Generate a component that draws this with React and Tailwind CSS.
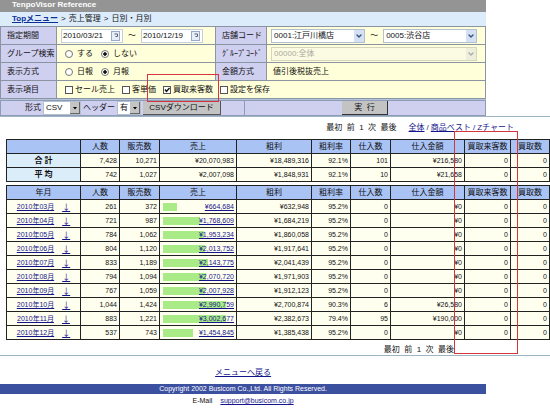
import { ChevronDown } from 'lucide-react'

const MONTHS = [
  ['2010年03月', '261', '372', '¥664,684', '¥632,948', '95.2%', '0', '¥0', 14],
  ['2010年04月', '721', '987', '¥1,768,609', '¥1,684,219', '95.2%', '0', '¥0', 37],
  ['2010年05月', '784', '1,062', '¥1,953,234', '¥1,860,058', '95.2%', '0', '¥0', 41],
  ['2010年06月', '804', '1,120', '¥2,013,752', '¥1,917,641', '95.2%', '0', '¥0', 42],
  ['2010年07月', '833', '1,189', '¥2,143,775', '¥2,041,439', '95.2%', '0', '¥0', 45],
  ['2010年08月', '794', '1,094', '¥2,070,720', '¥1,971,903', '95.2%', '0', '¥0', 43],
  ['2010年09月', '767', '1,059', '¥2,007,928', '¥1,912,123', '95.2%', '0', '¥0', 42],
  ['2010年10月', '1,044', '1,424', '¥2,990,759', '¥2,700,874', '90.3%', '6', '¥26,580', 63],
  ['2010年11月', '883', '1,221', '¥3,002,677', '¥2,382,673', '79.4%', '95', '¥190,000', 63],
  ['2010年12月', '537', '743', '¥1,454,845', '¥1,385,438', '95.2%', '0', '¥0', 30]
]

const TOTALS = [
  ['合 計', '7,428', '10,271', '¥20,070,983', '¥18,489,316', '92.1%', '101', '¥216,580', '0', '0'],
  ['平 均', '742', '1,027', '¥2,007,098', '¥1,848,931', '92.1%', '10', '¥21,658', '0', '0']
]

const HEADINGS = ['人数', '販売数', '売上', '粗利', '粗利率', '仕入数', '仕入金額', '買取来客数', '買取数']

const Columns = () => (
  <colgroup>
    <col className="w-[74px]" />
    <col className="w-[39px]" />
    <col className="w-[40px]" />
    <col className="w-[77px]" />
    <col className="w-[75px]" />
    <col className="w-[39px]" />
    <col className="w-[40px]" />
    <col className="w-[74px]" />
    <col className="w-[46px]" />
    <col className="w-[39px]" />
  </colgroup>
)

const HeadRow = ({ first }) => (
  <thead>
    <tr className="h-3.5 bg-[#a9c3f5]">
      {[first, ...HEADINGS].map((text, i) => (
        <th key={i} scope="col" className="border border-[#222] p-0 font-normal whitespace-nowrap">
          {text}
        </th>
      ))}
    </tr>
  </thead>
)

const Cell = ({ children }) => (
  <td className="border border-[#222] bg-[#fffff0] p-0 pr-0.5 text-right text-[7px]">{children}</td>
)

const Label = ({ htmlFor, children }) => (
  <div className="flex items-center bg-[#cfcff0] pl-1.5 whitespace-nowrap">
    {htmlFor ? <label htmlFor={htmlFor}>{children}</label> : <span>{children}</span>}
  </div>
)

const Field = ({ children, className = '' }) => (
  <div className={`flex items-center bg-[#ffffd9] ${className}`}>{children}</div>
)

const DateField = ({ id, label, value }) => (
  <span className="flex h-3.5 w-[62px] items-center border border-[#c5d0dc] bg-white">
    <input id={id} aria-label={label} defaultValue={value} className="w-[49px] pl-px" />
    <button type="button" aria-label={`${label} カレンダー`}>
      <svg viewBox="0 0 10 10" className="size-2.5">
        <rect x="0.5" y="0.5" width="8" height="9" fill="#e8eef8" stroke="#9aaac4" />
        <path d="M3.5 3h3v2.5h-2" fill="none" stroke="#55617c" />
      </svg>
    </button>
  </span>
)

const Select = ({ id, label, value, className = '', classic, disabled }) => (
  <span className={`relative flex h-3.5 ${className}`}>
    <select
      id={id}
      aria-label={label}
      disabled={disabled}
      className={`h-full w-full appearance-none border pl-0.5 ${
        disabled ? 'border-[#d5d5bd] bg-[#fbfbe4] text-[#aaaa9c]' : 'border-[#b3c1cf] bg-white'
      }`}
    >
      <option>{value}</option>
    </select>
    {classic ? (
      <span className="pointer-events-none absolute inset-y-px right-px flex w-2.5 items-end justify-center border-r border-b border-[#666] bg-[#c4c4c4] pb-0.5">
        <svg viewBox="0 0 6 4" className="h-1 w-1.5">
          <path d="M1 0h4L3 2.5z" />
        </svg>
      </span>
    ) : (
      <span
        className={`pointer-events-none absolute inset-y-px right-px flex w-2.5 items-center justify-center ${
          disabled ? 'bg-[#eeeedd] text-[#aaa]' : 'bg-[#d5e0f5] text-[#35507c]'
        }`}
      >
        <ChevronDown className="size-2" strokeWidth={4} />
      </span>
    )}
  </span>
)

const Radio = ({ name, label, checked }) => (
  <label className="flex items-center gap-1">
    <input
      type="radio"
      name={name}
      defaultChecked={checked}
      className="size-2 appearance-none rounded-full border border-[#777] bg-white checked:bg-[radial-gradient(circle,#111_35%,#fff_45%)]"
    />
    {label}
  </label>
)

const Check = ({ label, checked }) => (
  <label className="flex items-center gap-0.5 whitespace-nowrap">
    <span className="relative flex size-2">
      <input
        type="checkbox"
        defaultChecked={checked}
        className="peer size-2 appearance-none border border-[#555] bg-white"
      />
      <svg viewBox="0 0 8 8" className="pointer-events-none absolute inset-0 hidden peer-checked:block">
        <path d="M2 3.5L3.5 5.5L6.5 2" fill="none" stroke="#111" strokeWidth="1.4" />
      </svg>
    </span>
    {label}
  </label>
)

const Pager = () => <span className="whitespace-pre">最初  前  1  次  最後</span>

const SearchForm = () => (
  <form className="relative bg-[#b4c6de]">
    <div className="grid grid-cols-[55fr_158fr_50fr_218fr] auto-rows-[17px] gap-px border border-[#8a94a3] bg-[#8a94a3]">
      <Label htmlFor="from">指定期間</Label>
      <Field className="gap-1 pl-1">
        <DateField id="from" label="開始日" value="2010/03/21" />
        <span className="w-2.5 text-center">～</span>
        <DateField id="to" label="終了日" value="2010/12/19" />
      </Field>
      <Label htmlFor="shop-from">店舗コード</Label>
      <Field className="gap-1 pr-2 pl-1">
        <Select id="shop-from" label="店舗コード 開始" value="0001:江戸川橋店" className="flex-1" />
        <span className="w-2.5 text-center">～</span>
        <Select id="shop-to" label="店舗コード 終了" value="0005:渋谷店" className="flex-1" />
      </Field>
      <Label>グループ検索</Label>
      <Field className="gap-2 pl-2">
        <Radio name="group" label="する" />
        <Radio name="group" label="しない" checked />
      </Field>
      <Label htmlFor="group-code">ｸﾞﾙｰﾌﾟｺｰﾄﾞ</Label>
      <Field className="pr-2 pl-1">
        <Select id="group-code" label="グループコード" value="00000:全体" className="flex-1" disabled />
      </Field>
      <Label>表示方式</Label>
      <Field className="gap-2 pl-2">
        <Radio name="unit" label="日報" />
        <Radio name="unit" label="月報" checked />
      </Field>
      <Label>金額方式</Label>
      <Field className="pl-1.5">値引後税抜売上</Field>
      <Label>表示項目</Label>
      <Field className="col-span-3 gap-[7px] pl-2">
        <Check label="セール売上" />
        <Check label="客単価" />
        <Check label="買取来客数" checked />
        <Check label="設定を保存" />
      </Field>
    </div>
    <div className="mt-px flex h-4 items-center border border-[#8f9bb5] bg-[#cfcff0]">
      <label htmlFor="format" className="pr-0.5 pl-6">形式</label>
      <Select id="format" value="CSV" className="w-[38px]" classic />
      <label htmlFor="header" className="px-0.5">ヘッダー</label>
      <Select id="header" value="有" className="w-6" classic />
      <button type="button" className="ml-0.5 h-full w-[78px] border-r border-b border-[#555] bg-[#c3c3c3]">
        CSVダウンロード
      </button>
      <span className="h-full w-6 border-r border-[#8f9bb5]" />
      <span className="flex h-full flex-1 items-center justify-center">
        <button type="submit" className="h-full w-[46px] border-r border-b border-[#333] bg-[#c3c3c3] whitespace-pre">
          実  行
        </button>
      </span>
    </div>
    <div className="pointer-events-none absolute top-12 left-[147px] h-7 w-[72px] border border-[#d8343c]" />
  </form>
)

export default function App() {
  return (
    <main className="min-h-screen bg-white font-['Liberation_Sans','Noto_Sans_CJK_JP',sans-serif] text-[8px] leading-[10px] text-[#111]">
      <div className="w-[88.4%]">
        <h1 className="h-3 bg-[#949494] pl-3 font-bold text-white">TenpoVisor Reference</h1>
        <nav className="flex h-3.5 items-center gap-[3px] bg-[#dcecfb] pl-3">
          <a href="#top" className="font-bold text-[#0b2f94] underline">Topメニュー</a>
          <span>&gt;</span>
          <span>売上管理</span>
          <span>&gt;</span>
          <span>日別・月別</span>
        </nav>
        <SearchForm />
      </div>
      <div className="border-t border-[#9db5c4]" />

      <nav className="flex h-[22px] items-center justify-end gap-3 pr-9">
        <Pager />
        <span className="flex gap-0.5 text-[#16168c]">
          <a href="#all" className="underline">全体</a>
          <span>/</span>
          <a href="#best" className="underline">商品ベスト</a>
          <span>/</span>
          <a href="#chart" className="underline">Zチャート</a>
        </span>
      </nav>

      <section className="relative pl-1.5">
        <table className="w-full table-fixed border-collapse">
          <Columns />
          <HeadRow first="" />
          <tbody>
            {TOTALS.map(([name, ...values]) => (
              <tr key={name} className="h-3.5">
                <th scope="row" className="border border-[#222] bg-[#dcedfa] p-0">{name}</th>
                {values.map((value, i) => (
                  <Cell key={i}>{value}</Cell>
                ))}
              </tr>
            ))}
          </tbody>
        </table>
        <table className="mt-[3px] w-full table-fixed border-collapse">
          <Columns />
          <HeadRow first="年月" />
          <tbody>
            {MONTHS.map(([month, people, sold, sales, profit, rate, bought, cost, bar]) => (
              <tr key={month} className="h-3.5">
                <td className="border border-[#222] bg-[#fffff0] p-0 text-[#16168c]">
                  <div className="flex items-center justify-center gap-2">
                    <a href="#month" className="text-[7px] underline">{month}</a>
                    <a href="#days" className="font-['Noto_Sans_CJK_JP',sans-serif] underline">↓</a>
                  </div>
                </td>
                <Cell>{people}</Cell>
                <Cell>{sold}</Cell>
                <td className="border border-[#222] bg-[#fffff0] p-0 pr-0.5 pl-[3px] text-[7px]">
                  <div className="grid items-center">
                    <span className="col-start-1 row-start-1 h-2 bg-[#a9ec87]" style={{ width: bar }} />
                    <a href="#sales" className="col-start-1 row-start-1 justify-self-end text-[#16168c] underline">
                      {sales}
                    </a>
                  </div>
                </td>
                <Cell>{profit}</Cell>
                <Cell>{rate}</Cell>
                <Cell>{bought}</Cell>
                <Cell>{cost}</Cell>
                <Cell>0</Cell>
                <Cell>0</Cell>
              </tr>
            ))}
          </tbody>
        </table>
        <div className="pointer-events-none absolute -top-2 right-8 -bottom-3.5 w-16 border border-[#d8343c]" />
      </section>

      <nav className="flex h-4 items-center justify-end border-b border-[#9db5c4] pt-1 pr-24">
        <Pager />
      </nav>

      <footer className="w-[88.4%] text-center">
        <p className="pt-3 pb-1.5">
          <a href="#menu" className="text-[#16168c] underline">メニューへ戻る</a>
        </p>
        <p className="bg-[#3c50a0] text-[7px] text-white">Copyright 2002 Busicom Co.,Ltd. All Rights Reserved.</p>
        <p className="pt-0.5 text-[7px]">
          E-Mail
          <a href="mailto:support@busicom.co.jp" className="ml-2 text-[#16168c] underline">support@busicom.co.jp</a>
        </p>
      </footer>
    </main>
  )
}
